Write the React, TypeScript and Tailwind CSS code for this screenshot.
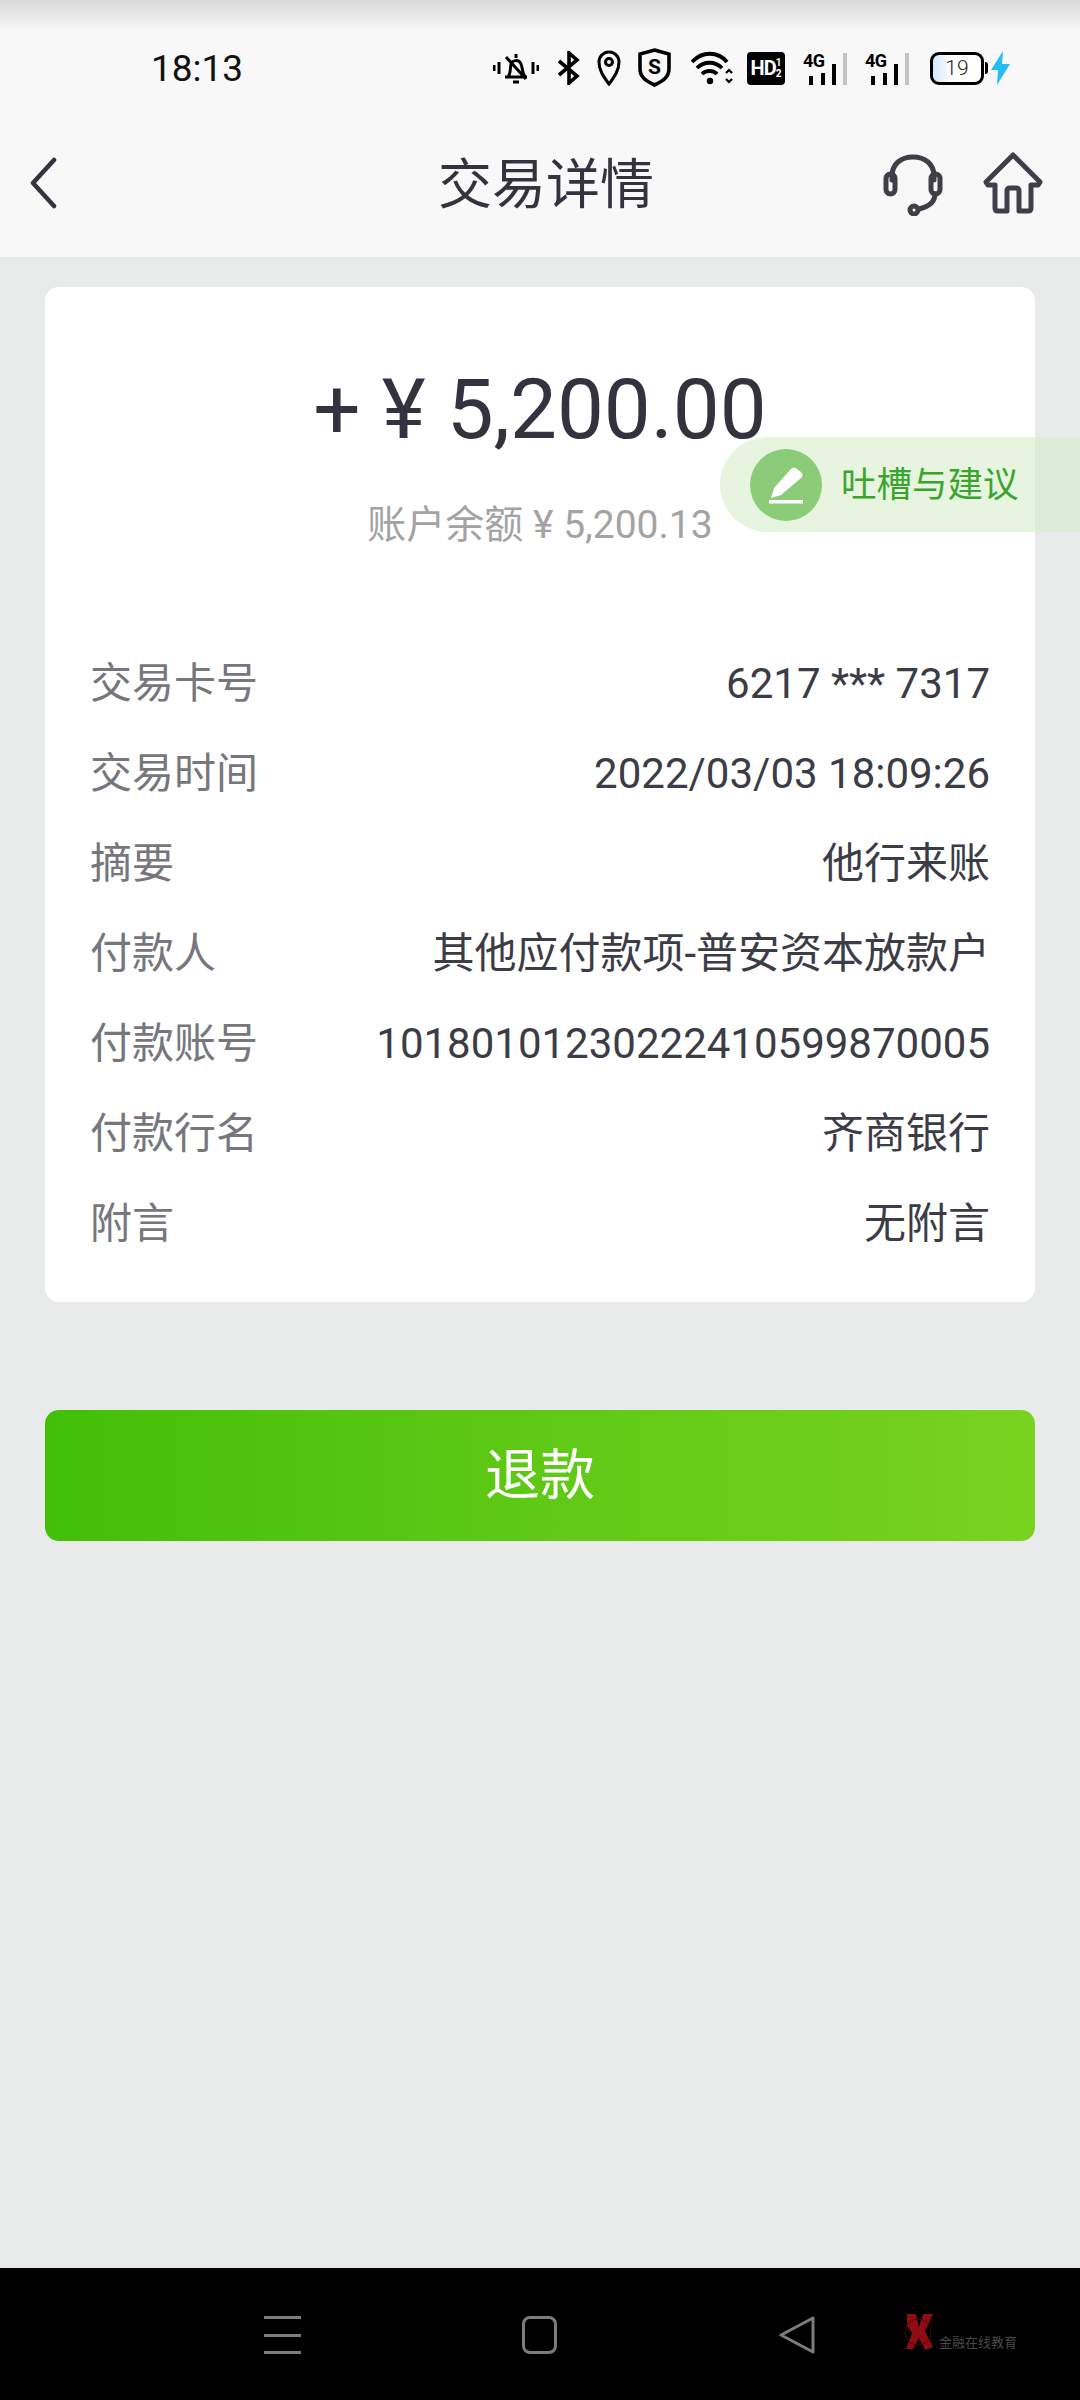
const Cjk = "font-['Roboto','Noto_Sans_CJK_SC',sans-serif]";

const rows: [string, string][] = [
  ["交易卡号", "6217 *** 7317"],
  ["交易时间", "2022/03/03 18:09:26"],
  ["摘要", "他行来账"],
  ["付款人", "其他应付款项-普安资本放款户"],
  ["付款账号", "10180101230222410599870005"],
  ["付款行名", "齐商银行"],
  ["附言", "无附言"],
];

const StatusIcons = () => (
  <div className="flex items-center text-black">
    <svg width="46" height="34" viewBox="0 0 46 34" fill="none" stroke="#000" strokeWidth="3">
      <path d="M1 14v6M6 11v12M40 11v12M45 14v6" />
      <path d="M12 26h22M15 26c3-4 2-9 3-13s8-5 10 0 1 9 4 13M23 3v4M20 31h6M13 6l20 22" />
    </svg>
    <svg width="23" height="34" viewBox="0 0 23 34" fill="none" stroke="#000" strokeWidth="3.6" className="ml-[18px]">
      <path d="M2 10l18 15-8 7V2l8 7L2 24" />
    </svg>
    <svg width="24" height="36" viewBox="0 0 24 36" fill="none" stroke="#000" strokeWidth="3" className="ml-[17px]">
      <path d="M12 34C6 26 2 20 2 12a10 10 0 0 1 20 0c0 8-4 14-10 22z" />
      <circle cx="12" cy="12" r="3.5" />
    </svg>
    <svg width="33" height="40" viewBox="0 0 33 40" fill="none" className="ml-[17px]">
      <path d="M16.5 2L31 6v15c0 8-6 12-14.500 16C8 33 2 29 2 21V6z" stroke="#000" strokeWidth="3.6" />
      <text x="16.5" y="26" textAnchor="middle" fontSize="21" fontWeight="700" fontFamily="Roboto" fill="#000">S</text>
    </svg>
    <svg width="42" height="34" viewBox="0 0 42 34" fill="none" stroke="#000" strokeWidth="3.8" className="ml-[20px]">
      <path d="M1 11c10-11 26-11 35 0M6 17c7-7 18-7 25 0M11 23c4-4 11-4 15 0" />
      <circle cx="19" cy="30" r="3.200" fill="#000" stroke="none" />
      <path d="M35 22l3-3 3 3M35 28l3 3 3-3" strokeWidth="2.200" />
    </svg>
    <div className="ml-[14px] flex h-[33px] w-[38px] items-center justify-center rounded-[4px] bg-black font-['Roboto',sans-serif] text-[20px] font-bold leading-none tracking-[-1px] text-white">
      HD
      <span className="flex flex-col text-center text-[10px] leading-[11px] tracking-normal">
        <span>1</span>
        <span>2</span>
      </span>
    </div>
    <Signal className="ml-[18px]" />
    <Signal className="ml-[18px]" />
    <div className="ml-[21px] flex h-[33px] w-[54px] items-center justify-center rounded-[9px] border-[3px] border-black bg-gradient-to-r from-[#d4e8f7] to-white to-40% font-['Roboto',sans-serif] text-[21px] font-light leading-none text-[#222]">
      19
    </div>
    <div className="ml-[1px] h-[12px] w-[3px] rounded-r-sm bg-black" />
    <svg width="19" height="34" viewBox="0 0 19 34" className="ml-[3px]">
      <path d="M12 0L0 19h7L6 34l13-21h-8z" fill="#25bdf5" />
    </svg>
  </div>
);

function Signal({ className }: { className: string }) {
  return (
    <svg width="44" height="34" viewBox="0 0 44 34" className={className}>
      <text x="0" y="16" fontSize="18" fontWeight="700" fontFamily="Roboto" fill="#000" textLength="22">4G</text>
      <rect x="6" y="25" width="4" height="9" fill="#000" />
      <rect x="18" y="22" width="4" height="12" fill="#000" />
      <rect x="29" y="13" width="4" height="21" fill="#000" />
      <rect x="40" y="2" width="4" height="32" fill="#c4c4c4" />
    </svg>
  );
}

export default function App() {
  return (
    <div className={`relative flex h-[2400px] w-[1080px] flex-col overflow-hidden bg-[#e9ebea] ${Cjk}`}>
      <div className="h-[257px] shrink-0 bg-[#f8f8f8]">
        <div className="h-[30px] bg-gradient-to-b from-[#d8d8d8] to-[#f8f8f8]" />
        <div className="flex h-[76px] items-center justify-between pl-[151px] pr-[70px]">
          <span className="font-['Roboto',sans-serif] text-[37px] leading-none text-[#111]">18:13</span>
          <StatusIcons />
        </div>
        <div className="relative flex h-[151px] items-center justify-center">
          <svg width="28" height="52" viewBox="0 0 28 52" fill="none" stroke="#33333f" strokeWidth="4.5" strokeLinecap="round" strokeLinejoin="round" className="absolute left-[29px] top-[51px]">
            <path d="M25 3L4 26l21 23" />
          </svg>
          <span className="mt-[8px] pl-[12px] text-[54px] leading-none text-[#33333f]">交易详情</span>
          <svg width="60" height="62" viewBox="0 0 60 62" fill="none" stroke="#3f3f4a" strokeWidth="5" strokeLinecap="round" className="absolute left-[883px] top-[48px]">
            <path d="M9 26v-4C9 10 18 3 30 3s21 7 21 19v4" />
            <rect x="3" y="20" width="9" height="20" rx="4.5" />
            <rect x="48" y="20" width="9" height="20" rx="4.5" />
            <path d="M52 40c0 9-8 13-16 15" />
            <circle cx="31" cy="56" r="4" />
          </svg>
          <svg width="60" height="62" viewBox="0 0 60 62" fill="none" stroke="#3f3f4a" strokeWidth="5" strokeLinejoin="round" className="absolute left-[983px] top-[46px]">
            <path d="M30 3L3 30l2 3h7v23c0 2 1 3 3 3h9V39c0-2 1-3 3-3h6c2 0 3 1 3 3v20h9c2 0 3-1 3-3V33h7l2-3z" />
          </svg>
        </div>
      </div>

      <div className="mx-[45px] mt-[30px] flex h-[1015px] flex-col rounded-[14px] bg-white px-[45px]">
        <div className="mt-[86px] flex h-[74px] items-center justify-center gap-[21px] font-['Roboto',sans-serif] text-[83.500px] leading-none text-[#33333f]">
          <span>+</span>
          <span>¥</span>
          <span>5,200.00</span>
        </div>
        <div className="mt-[55px] text-center text-[39px] leading-[46px] text-[#a3a3a3]">账户余额 ¥ 5,200.13</div>
        <div className="mt-[114px] flex flex-col gap-[46px]">
          {rows.map(([label, value]) => (
            <div key={label} className="flex h-[44px] items-center justify-between text-[42px] leading-none">
              <span className="text-[#76767c]">{label}</span>
              <span className="text-[#3c3c46]">{value}</span>
            </div>
          ))}
        </div>
      </div>

      <button className="mx-[45px] mt-[108px] flex h-[131px] shrink-0 items-center justify-center rounded-[14px] bg-gradient-to-r from-[#41bf08] to-[#78d31f] text-[55px] leading-none text-white">
        退款
      </button>

      <div className="absolute bottom-0 left-0 h-[132px] w-full bg-black">
        <div className="absolute left-[264px] top-[48px] flex h-[38px] w-[37px] flex-col justify-between">
          <div className="h-[3px] bg-[#7c7c7c]" />
          <div className="h-[3px] bg-[#7c7c7c]" />
          <div className="h-[3px] bg-[#7c7c7c]" />
        </div>
        <div className="absolute left-[522px] top-[48px] h-[38px] w-[35px] rounded-[8px] border-[3px] border-[#7c7c7c]" />
        <svg width="36" height="38" viewBox="0 0 36 38" fill="none" stroke="#7c7c7c" strokeWidth="3" strokeLinejoin="round" className="absolute left-[779px] top-[48px]">
          <path d="M34 2v34L2 19z" />
        </svg>
        <svg width="32" height="36" viewBox="0 0 32 36" className="absolute left-[903px] top-[46px]">
          <path d="M4 0h9l3 13L20 0h10l-8 17 8 16-8 3-6-12-6 11H3l6-16-5-7z" fill="#8f0d12" />
          <circle cx="15" cy="18" r="13" fill="none" stroke="#4a0709" strokeWidth="1" />
        </svg>
        <span className="absolute left-[939px] top-[68px] text-[13px] leading-none text-[#4a4a4a]">金融在线教育</span>
      </div>

      <div className="absolute left-[720px] top-[437px] flex h-[95px] w-[360px] items-center rounded-l-[48px] bg-[#d5eccb]/60 pl-[30px]">
        <div className="flex h-[72px] w-[72px] items-center justify-center rounded-full bg-[#8bcc78]">
          <svg width="36" height="38" viewBox="0 0 36 38" fill="#fff">
            <path d="M3 32l3-10L23 3c2-2 4-2 6 0l4 3c2 2 2 4 0 6L13 29z" />
            <rect x="1" y="34" width="34" height="3.500" />
          </svg>
        </div>
        <span className="ml-[19px] mt-[2px] text-[35.500px] leading-none text-[#3aa52c]">吐槽与建议</span>
      </div>
    </div>
  );
}
